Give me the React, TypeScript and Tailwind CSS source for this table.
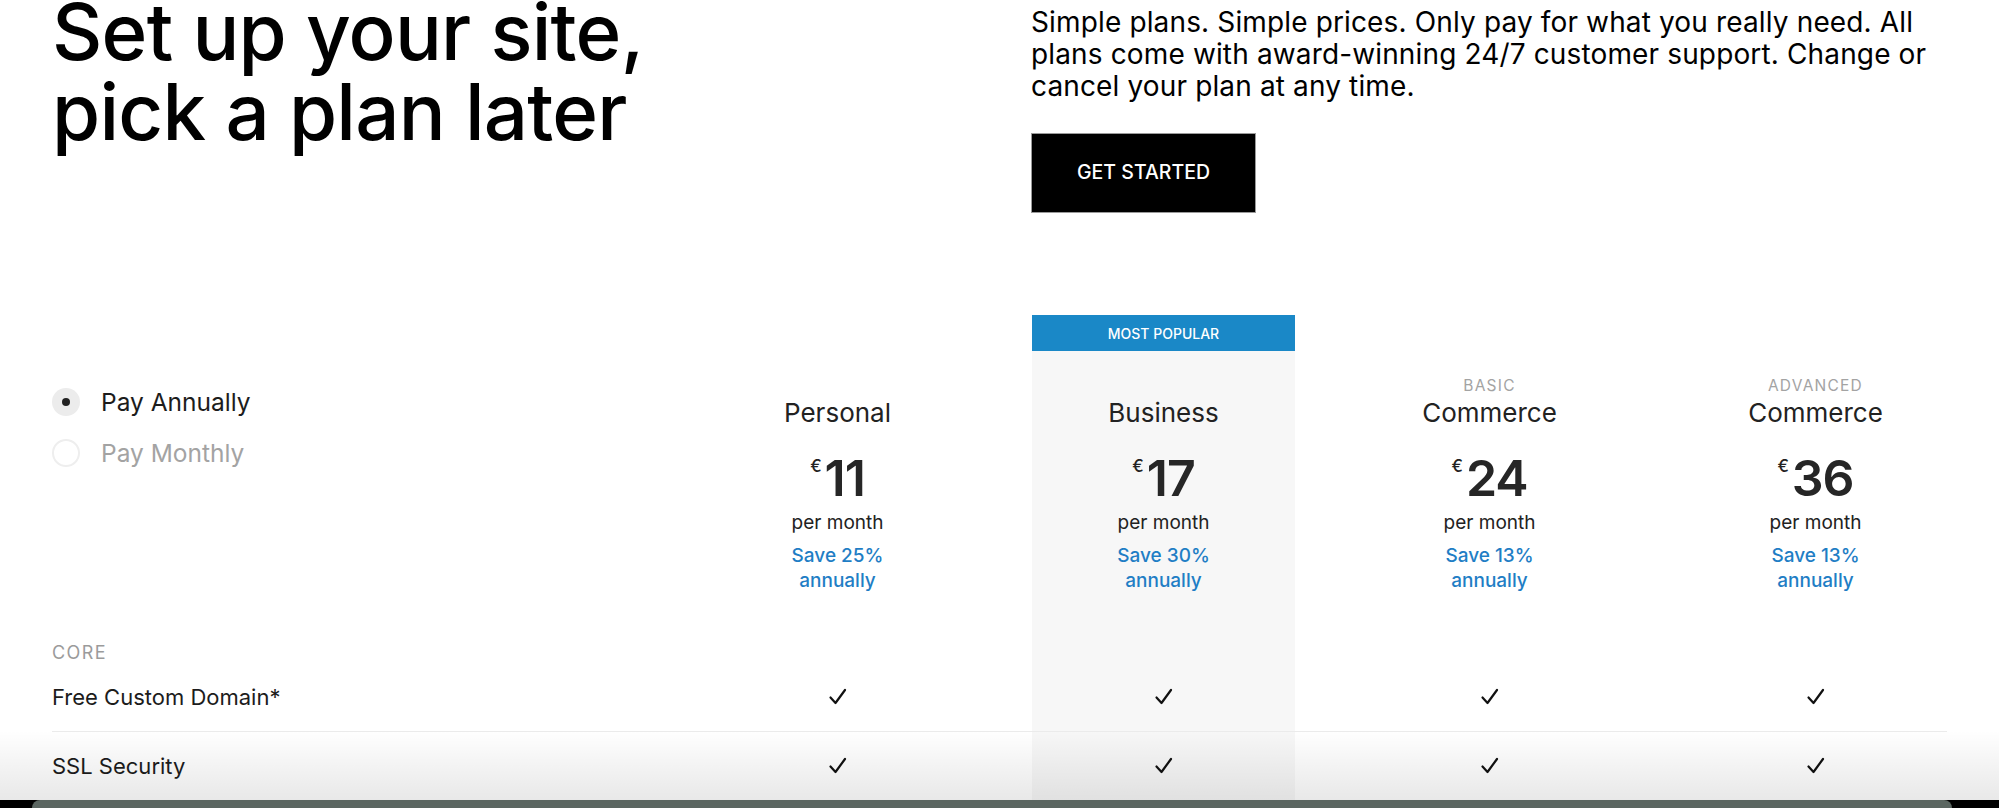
import React from "react";

const plans = [
  { tier: "", name: "Personal", price: "11", save: "Save 25%", popular: false },
  { tier: "", name: "Business", price: "17", save: "Save 30%", popular: true },
  { tier: "BASIC", name: "Commerce", price: "24", save: "Save 13%", popular: false },
  { tier: "ADVANCED", name: "Commerce", price: "36", save: "Save 13%", popular: false },
];

const features = ["Free Custom Domain*", "SSL Security"];

const grid = "grid grid-cols-[591px_263px_263px_263px_263px] gap-x-[63px]";

function Check() {
  return (
    <svg width="24" height="24" viewBox="0 0 24 24" fill="none">
      <path d="M4.5 12.5 9.5 18 19 5" stroke="#111" strokeWidth="2.2" strokeLinecap="round" strokeLinejoin="round" />
    </svg>
  );
}

function Radio({ label, checked }: { label: string; checked: boolean }) {
  return (
    <label className="flex h-[28px] items-center gap-[21px]">
      {checked ? (
        <span className="flex h-[28px] w-[28px] items-center justify-center rounded-full bg-[#ececec]">
          <span className="h-[8px] w-[8px] rounded-full bg-[#222]" />
        </span>
      ) : (
        <span className="h-[28px] w-[28px] rounded-full border-2 border-[#eeeeee] bg-white" />
      )}
      <span className={checked ? "text-[24.5px] text-[#1c1c1c]" : "text-[24.5px] text-[#a3a3a3]"}>{label}</span>
    </label>
  );
}

export default function App() {
  return (
    <div className="relative h-[808px] overflow-hidden bg-white font-['Inter',sans-serif] text-black">
      <div className="px-[52px]">
        {/* intro */}
        <div className="flex">
          <h1 className="mt-[-8px] w-[979px] text-[78px] font-medium leading-[80px] tracking-[-0.01em]">
            Set up your site,
            <br />
            pick a plan later
          </h1>
          <div className="w-[916px] pt-[6px]">
            <p className="text-[28px] leading-[32px] tracking-[0.005em]">
              Simple plans. Simple prices. Only pay for what you really need. All plans come with award-winning 24/7
              customer support. Change or cancel your plan at any time.
            </p>
            <button className="mt-[31px] flex h-[80px] w-[225px] items-center justify-center border border-[#9a9a9a] bg-black text-[19.5px] font-medium text-white">
              GET STARTED
            </button>
          </div>
        </div>

        {/* plan header */}
        <div className={`${grid} mt-[102px]`}>
          <div className="flex flex-col gap-[23px] pt-[73px]">
            <Radio label="Pay Annually" checked />
            <Radio label="Pay Monthly" checked={false} />
          </div>
          {plans.map((p) => (
            <div key={p.price} className={`flex flex-col items-center pb-[26px] ${p.popular ? "bg-[#f7f7f7]" : ""}`}>
              <div
                className={`flex h-[36px] w-full items-center justify-center text-[14px] font-medium text-white ${
                  p.popular ? "bg-[#1a88c7]" : "bg-white"
                }`}
              >
                {p.popular ? "MOST POPULAR" : ""}
              </div>
              <div className="mt-[26px] h-[18px] text-[15.5px] leading-[18px] tracking-[0.08em] text-[#a3a3a3]">{p.tier}</div>
              <div className="mt-[3px] text-[26px] leading-[30px] text-[#222]">{p.name}</div>
              <div className="mt-[24px] flex items-start">
                <span className="mr-[3px] mt-[4px] text-[17px] font-medium leading-[20px] text-[#222]">€</span>
                <span className="text-[50px] font-semibold leading-[52px] tracking-[-0.02em] text-[#262626]">{p.price}</span>
              </div>
              <div className="mt-[7px] text-[19px] leading-[24px] text-[#222]">per month</div>
              <div className="mt-[8px] text-center text-[19px] font-medium leading-[25px] text-[#1f7ec5]">
                {p.save}
                <br />
                annually
              </div>
            </div>
          ))}
        </div>

        {/* core label */}
        <div className={grid}>
          <div className="pt-[24px] text-[18px] leading-[20px] tracking-[0.08em] text-[#9b9b9b]">CORE</div>
          {plans.map((p) => (
            <div key={p.price} className={p.popular ? "bg-[#f7f7f7]" : ""} />
          ))}
        </div>

        {/* feature rows */}
        {features.map((f) => (
          <div key={f} className={`${grid} h-[69px] border-b border-[#ebebeb]`}>
            <div className="flex items-center text-[22px] text-[#1c1c1c]">{f}</div>
            {plans.map((p) => (
              <div key={p.price} className={`flex items-center justify-center ${p.popular ? "bg-[#f7f7f7]" : ""}`}>
                <Check />
              </div>
            ))}
          </div>
        ))}
      </div>

      {/* window shadow + bar at the bottom edge */}
      <div className="absolute inset-x-0 bottom-[8px] h-[70px] bg-linear-to-b from-black/0 to-black/[0.09]" />
      <div className="absolute inset-x-0 bottom-0 h-[8px] bg-black">
        <div className="ml-[32px] mr-[47px] h-full rounded-t-[10px] bg-[#5b6661]" />
      </div>
    </div>
  );
}
